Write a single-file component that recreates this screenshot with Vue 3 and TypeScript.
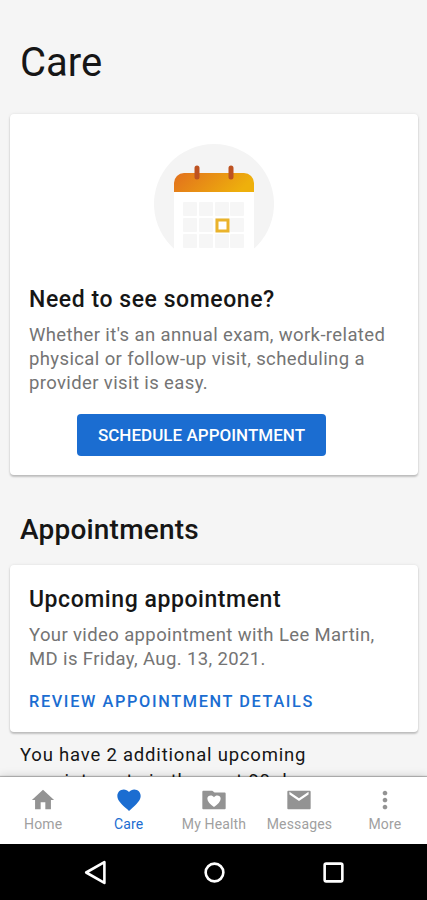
<script setup lang="ts">
interface Tab {
  label: string
  icon: string
  active?: boolean
}

const tabs: Tab[] = [
  { label: 'Home', icon: 'M10 20v-6h4v6h4.800v-8h2.700L12 3.200 2.500 12h2.700v8z' },
  {
    label: 'Care',
    icon: 'M12 21.35l-1.45-1.32C5.4 15.36 2 12.28 2 8.5 2 5.42 4.42 3 7.5 3c1.74 0 3.41.81 4.5 2.09C13.09 3.81 14.76 3 16.5 3 19.58 3 22 5.42 22 8.5c0 3.78-3.4 6.86-8.55 11.54L12 21.35z',
    active: true,
  },
  {
    label: 'My Health',
    icon: 'M21 5.500h-8.500l-2-1.500H3c-.6 0-1 .4-1 1v14c0 .6.4 1 1 1h18c.6 0 1-.4 1-1V6.500c0-.6-.4-1-1-1zM12 18C8.8 15.600 6.300 13.300 6.300 10.900C6.300 7.900 10.300 7.200 12 9.600C13.700 7.200 17.700 7.900 17.700 10.900C17.700 13.300 15.200 15.600 12 18z',
  },
  {
    label: 'Messages',
    icon: 'M21 4H3c-.6 0-1 .4-1 1v14c0 .6.4 1 1 1h18c.6 0 1-.4 1-1V5c0-.6-.4-1-1-1zm-.8 3.200L12 12.800 3.800 7.200V5L12 10.500 20.200 5z',
  },
  {
    label: 'More',
    icon: 'M12 8c1.1 0 2-.9 2-2s-.9-2-2-2-2 .9-2 2 .9 2 2 2zm0 2c-1.1 0-2 .9-2 2s.9 2 2 2 2-.9 2-2-.9-2-2-2zm0 6c-1.1 0-2 .9-2 2s.9 2 2 2 2-.9 2-2-.9-2-2-2z',
  },
]

const columns = [29, 45, 61, 76]
const rows = [58, 74, 90]
</script>

<template>
  <div class="screen">
    <main class="content">
      <h1 class="title">Care</h1>

      <section class="card schedule">
        <svg class="calendar" viewBox="0 0 120 106" width="120" height="106">
          <defs>
            <linearGradient id="header-fill" x1="0" y1="0" x2="1" y2="0.25">
              <stop offset="0" stop-color="#e2701d" />
              <stop offset="1" stop-color="#eeb00c" />
            </linearGradient>
          </defs>
          <path d="M21.500 106A60 60 0 1 1 98.500 106z" fill="#f4f4f4" />
          <path d="M20 48h80v58H20z" fill="#fff" />
          <template v-for="y in rows" :key="y">
            <rect
              v-for="x in columns"
              :key="x"
              :x="x"
              :y="y"
              width="14"
              height="14"
              rx="1"
              fill="#f6f6f6"
            />
          </template>
          <path d="M20 48V39a10 10 0 0 1 10-10h60a10 10 0 0 1 10 10v9z" fill="url(#header-fill)" />
          <path d="M43 24v9M77 24v9" stroke="#bd5220" stroke-width="5" stroke-linecap="round" />
          <rect x="63" y="76" width="11" height="11" fill="#fff" stroke="#eab32b" stroke-width="3" />
        </svg>
        <h2 class="card-title">Need to see someone?</h2>
        <p class="body intro">
          Whether it's an annual exam, work-related<br />physical or follow-up visit, scheduling a<br />provider visit is easy.
        </p>
        <button class="primary" type="button">SCHEDULE APPOINTMENT</button>
      </section>

      <h2 class="section-title">Appointments</h2>

      <section class="card upcoming">
        <h3 class="card-title">Upcoming appointment</h3>
        <p class="body details">Your video appointment with Lee Martin,<br />MD is Friday, Aug. 13, 2021.</p>
        <a class="link">REVIEW APPOINTMENT DETAILS</a>
      </section>

      <p class="more-note">You have 2 additional upcoming<br />appointments in the next 90 days.</p>
    </main>

    <nav class="tabs">
      <a v-for="tab in tabs" :key="tab.label" class="tab" :class="{ active: tab.active }">
        <svg class="tab-icon" viewBox="0 0 24 24"><path :d="tab.icon" fill-rule="evenodd" /></svg>
        <span class="tab-label">{{ tab.label }}</span>
      </a>
    </nav>

    <footer class="system">
      <svg viewBox="0 0 24 24"><path d="M21.500 2v20L4 12z" /></svg>
      <svg viewBox="0 0 24 24"><circle cx="12" cy="12" r="8.500" /></svg>
      <svg viewBox="0 0 24 24"><rect x="3.500" y="3.500" width="17" height="17" rx="1.500" /></svg>
    </footer>
  </div>
</template>

<style>
body {
  margin: 0;
}
</style>

<style scoped>
.screen {
  display: flex;
  flex-direction: column;
  width: 427px;
  height: 900px;
  overflow: hidden;
  background: #f5f5f5;
  font-family: Roboto, sans-serif;
  color: #161616;
}

h1,
h2,
h3,
p {
  margin: 0;
}

.content {
  height: 777px;
  flex: none;
  overflow: hidden;
  white-space: nowrap;
}

.title {
  padding: 39px 20px 27px;
  font-size: 40px;
  line-height: 48px;
  font-weight: 400;
}

.card {
  box-sizing: border-box;
  display: flex;
  flex-direction: column;
  margin: 0 9px 0 10px;
  padding: 0 19px;
  background: #fff;
  border-radius: 4px;
  box-shadow: 0 2px 2px rgba(0, 0, 0, 0.2), 0 0 3px rgba(0, 0, 0, 0.1);
}

.schedule {
  height: 361px;
}

.calendar {
  align-self: center;
  margin-top: 30px;
  overflow: visible;
}

.card-title {
  font-size: 23px;
  line-height: 28px;
  font-weight: 500;
  letter-spacing: 0.56px;
}

.schedule .card-title {
  margin-top: 36px;
}

.body {
  font-size: 18.500px;
  line-height: 24px;
  letter-spacing: 0.38px;
  color: #747474;
}

.intro {
  margin-top: 9px;
}

.primary {
  width: 249px;
  height: 42px;
  margin: 19px 0 0 48px;
  padding: 1px 0 0;
  border: 0;
  border-radius: 4px;
  background: #1b6dd1;
  color: #fff;
  font: 500 17px/41px Roboto, sans-serif;
  letter-spacing: 0.03px;
}

.section-title {
  padding: 38px 20px 18px;
  font-size: 28px;
  line-height: 34px;
  font-weight: 500;
  letter-spacing: 0.2px;
}

.upcoming {
  height: 167px;
}

.upcoming .card-title {
  margin-top: 21px;
}

.details {
  margin-top: 9px;
}

.link {
  margin-top: 21px;
  font-size: 16.300px;
  line-height: 20px;
  font-weight: 500;
  letter-spacing: 1.64px;
  color: #1b6dd1;
}

.more-note {
  padding: 10px 20px 0;
  font-size: 18.500px;
  line-height: 26px;
  letter-spacing: 0.8px;
}

.tabs {
  position: relative;
  display: grid;
  grid-template-columns: repeat(5, 1fr);
  flex: none;
  height: 67px;
  background: #fff;
  box-shadow: 0 -1px 1px rgba(0, 0, 0, 0.25), 0 -2px 8px rgba(0, 0, 0, 0.12);
}

.tab {
  display: flex;
  flex-direction: column;
  align-items: center;
  padding: 9px 0 0 1px;
  color: #939393;
}

.tab-icon {
  width: 28px;
  height: 28px;
  fill: currentColor;
}

.tab-label {
  margin-top: 2px;
  font-size: 14px;
  line-height: 16px;
  letter-spacing: 0.14px;
  white-space: nowrap;
  color: #a0a0a0;
}

.tab.active,
.tab.active .tab-label {
  color: #1b6dd1;
}

.system {
  display: flex;
  align-items: center;
  justify-content: space-between;
  flex: 1;
  padding: 0 81px 0 82px;
  background: #000;
}

.system svg {
  width: 25px;
  height: 25px;
  fill: none;
  stroke: #fff;
  stroke-width: 2.500;
  stroke-linejoin: round;
}
</style>
